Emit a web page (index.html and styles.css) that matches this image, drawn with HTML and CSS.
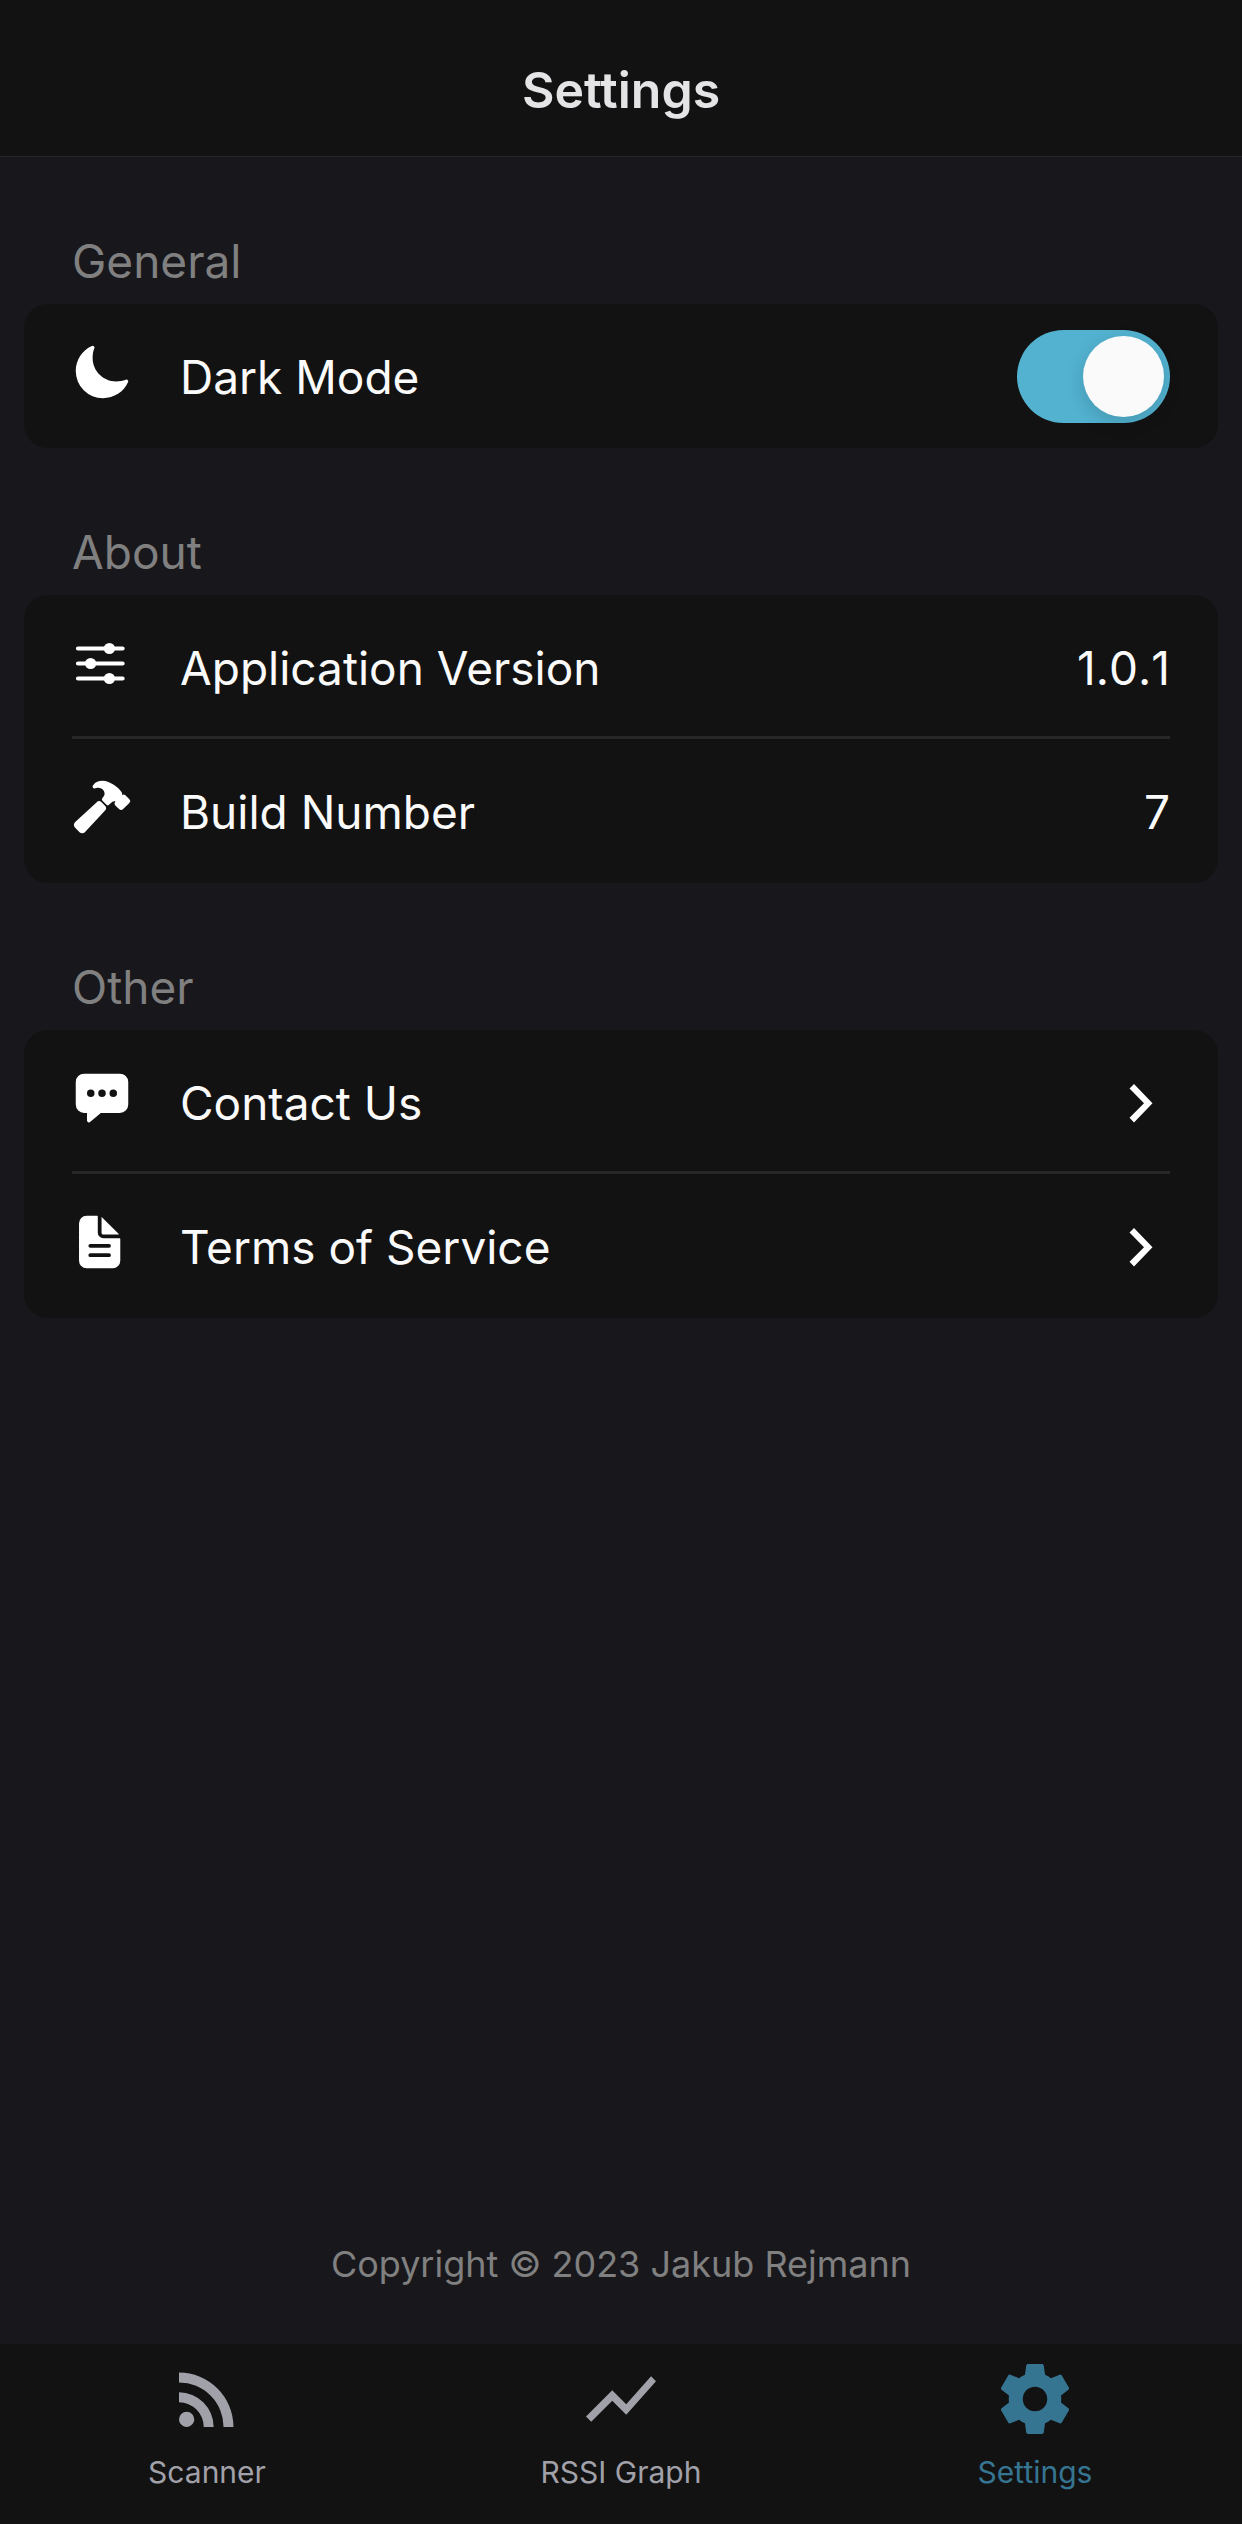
FILE: index.html
```html
<!DOCTYPE html>
<html lang="en">
<head>
<meta charset="utf-8">
<meta name="viewport" content="width=device-width, initial-scale=1">
<title>Settings</title>
<link rel="stylesheet" href="styles.css">
</head>
<body>
<header class="header">
  <h1 class="header-title">Settings</h1>
</header>

<main class="content">
  <section>
    <h2 class="section-title">General</h2>
    <ul class="card">
      <li class="row">
        <svg class="row-icon" viewBox="0 0 512 512" aria-hidden="true"><path d="M264 480A232 232 0 0132 248c0-94 54-178.28 137.61-214.67a16 16 0 0121.06 21.06C181.07 76.43 176 104.66 176 136c0 110.28 89.72 200 200 200 31.34 0 59.57-5.07 81.61-14.67a16 16 0 0121.06 21.06C442.28 426 358 480 264 480z"/></svg>
        <label class="row-label" for="dark-mode">Dark Mode</label>
        <input class="switch" type="checkbox" role="switch" id="dark-mode" checked>
      </li>
    </ul>
  </section>

  <section>
    <h2 class="section-title">About</h2>
    <ul class="card">
      <li class="row">
        <svg class="row-icon" viewBox="0 0 60 60" aria-hidden="true"><path d="M6 15.5h44.6M6 30.5h44.6M6 45.5h44.6" fill="none" stroke="currentColor" stroke-width="4.2" stroke-linecap="round"/><circle cx="37.4" cy="15.5" r="5.6"/><circle cx="18.6" cy="30.5" r="5.6"/><circle cx="37.4" cy="45.5" r="5.6"/></svg>
        <span class="row-label">Application Version</span>
        <span class="row-value">1.0.1</span>
      </li>
      <li class="row">
        <svg class="row-icon" viewBox="0 0 512 512" aria-hidden="true"><path d="M280.16 242.79l-26.11-26.12a32 32 0 00-45.14-.12L27.38 384.08c-6.61 6.23-10.95 14.17-11.35 23.06a32.11 32.11 0 009.21 23.94l39 39.43a.46.46 0 00.07.07A32.29 32.29 0 0087 480h1.18c8.89-.33 17-4.64 23.32-11.26l168.68-180.7a32 32 0 00-.02-45.25zM490 190l-.31-.31-34.27-33.92a21.46 21.46 0 00-15.28-6.26 21.89 21.89 0 00-12.79 4.14c0-.43.06-.85.09-1.22.45-6.5 1.15-16.32-5.2-25.22a258 258 0 00-24.8-28.74.6.6 0 00-.08-.08c-13.32-13.12-42.31-37.83-86.72-55.94A139.55 139.55 0 00257.56 32C226 32 202 46.24 192.81 54.68a119.92 119.92 0 00-14.18 17.22 16 16 0 0018.65 24.34 74.45 74.45 0 018.58-2.63 63.46 63.46 0 0118.45-1.15c13.19 1.09 28.79 7.64 35.69 13.09 11.7 9.41 17.33 22.09 18.26 41.09.18 3.82-7.72 18.14-20 34.48a16 16 0 001.45 21l34.41 34.41a16 16 0 0022 .62c9.73-8.69 24.55-21.79 29.73-25 7.69-4.73 13.19-5.64 14.7-5.8a19.18 19.18 0 0111.29 2.38 1.24 1.24 0 01-.31.95l-1.82 1.73-.3.28a21.52 21.52 0 00.05 30.54l34.26 33.91a21.45 21.45 0 0015.28 6.25 21.7 21.7 0 0015.22-6.2l55.5-54.82c.19-.19.38-.39.56-.59A21.87 21.87 0 00490 190z"/></svg>
        <span class="row-label">Build Number</span>
        <span class="row-value">7</span>
      </li>
    </ul>
  </section>

  <section>
    <h2 class="section-title">Other</h2>
    <ul class="card">
      <li>
        <a class="row" href="#contact">
          <svg class="row-icon" viewBox="0 0 512 512" aria-hidden="true"><path d="M408 48H104a72.08 72.08 0 00-72 72v192a72.08 72.08 0 0072 72h24v64a16 16 0 0026.25 12.29L245.74 384H408a72.08 72.08 0 0072-72V120a72.08 72.08 0 00-72-72zM160 248a32 32 0 1132-32 32 32 0 01-32 32zm96 0a32 32 0 1132-32 32 32 0 01-32 32zm96 0a32 32 0 1132-32 32 32 0 01-32 32z"/></svg>
          <span class="row-label">Contact Us</span>
          <svg class="row-chevron" viewBox="0 0 60 60" aria-hidden="true"><path d="M19.5 44.8 34 30.2 19.5 15.5 24 11 42.5 30.2 24 49.4z"/></svg>
        </a>
      </li>
      <li>
        <a class="row" href="#terms">
          <svg class="row-icon" viewBox="20 0 512 512" aria-hidden="true"><path d="M428 224H288a48 48 0 01-48-48V36a4 4 0 00-4-4h-92a64 64 0 00-64 64v320a64 64 0 0064 64h224a64 64 0 0064-64V228a4 4 0 00-4-4zm-92 160H176a16 16 0 010-32h160a16 16 0 010 32zm0-80H176a16 16 0 010-32h160a16 16 0 010 32z"/><path d="M419.22 188.59L275.41 44.78a2 2 0 00-3.41 1.41V176a16 16 0 0016 16h129.81a2 2 0 001.41-3.41z"/></svg>
          <span class="row-label">Terms of Service</span>
          <svg class="row-chevron" viewBox="0 0 60 60" aria-hidden="true"><path d="M19.5 44.8 34 30.2 19.5 15.5 24 11 42.5 30.2 24 49.4z"/></svg>
        </a>
      </li>
    </ul>
  </section>

  <p class="copyright">Copyright © 2023 Jakub Rejmann</p>
</main>

<nav class="tabs" aria-label="Main">
  <a class="tab" href="#scanner">
    <svg class="tab-icon" viewBox="0 0 24 24" aria-hidden="true"><path d="M6.18,15.64A2.18,2.18 0 0,1 8.36,17.82C8.36,19 7.38,20 6.18,20C5,20 4,19 4,17.82A2.18,2.18 0 0,1 6.18,15.64M4,4.44A15.56,15.56 0 0,1 19.56,20H16.73A12.73,12.73 0 0,0 4,7.27V4.44M4,10.1A9.9,9.9 0 0,1 13.9,20H11.07A7.07,7.07 0 0,0 4,12.93V10.1Z"/></svg>
    <span>Scanner</span>
  </a>
  <a class="tab" href="#graph">
    <svg class="tab-icon" viewBox="0 0 24 24" aria-hidden="true"><path d="M3.5,18.5L9.5,12.5L13.5,16.5L22,6.92L20.59,5.5L13.5,13.5L9.5,9.5L2,17L3.5,18.5Z"/></svg>
    <span>RSSI Graph</span>
  </a>
  <a class="tab tab-active" href="#settings" aria-current="page">
    <svg class="tab-icon" viewBox="0 0 24 24" aria-hidden="true"><path d="M12,15.5A3.5,3.5 0 0,1 8.5,12A3.5,3.5 0 0,1 12,8.5A3.5,3.5 0 0,1 15.5,12A3.5,3.5 0 0,1 12,15.5M19.43,12.97C19.47,12.65 19.5,12.33 19.5,12C19.5,11.67 19.47,11.34 19.43,11L21.54,9.37C21.73,9.22 21.78,8.95 21.66,8.73L19.66,5.27C19.54,5.05 19.27,4.96 19.05,5.05L16.56,6.05C16.04,5.66 15.5,5.32 14.87,5.07L14.5,2.42C14.46,2.18 14.25,2 14,2H10C9.75,2 9.54,2.18 9.5,2.42L9.13,5.07C8.5,5.32 7.96,5.66 7.44,6.05L4.95,5.05C4.73,4.96 4.46,5.05 4.34,5.27L2.34,8.73C2.21,8.95 2.27,9.22 2.46,9.37L4.57,11C4.53,11.34 4.5,11.67 4.5,12C4.5,12.33 4.53,12.65 4.57,12.97L2.46,14.63C2.27,14.78 2.21,15.05 2.34,15.27L4.34,18.73C4.46,18.95 4.73,19.03 4.95,18.95L7.44,17.94C7.96,18.34 8.5,18.68 9.13,18.93L9.5,21.58C9.54,21.82 9.75,22 10,22H14C14.25,22 14.46,21.82 14.5,21.58L14.87,18.93C15.5,18.67 16.04,18.34 16.56,17.94L19.05,18.95C19.27,19.03 19.54,18.95 19.66,18.73L21.66,15.27C21.78,15.05 21.73,14.78 21.54,14.63L19.43,12.97Z"/></svg>
    <span>Settings</span>
  </a>
</nav>
</body>
</html>
```
FILE: styles.css
```css
:root {
  --background: #18171c;
  --surface: #121212;
  --divider: #27272a;
  --text: #fafafa;
  --muted: #808080;
  --accent: #52b2d0;
}

* {
  box-sizing: border-box;
}

body {
  margin: 0;
  min-height: 100vh;
  display: flex;
  flex-direction: column;
  background: var(--background);
  color: var(--text);
  font-family: Inter, "Liberation Sans", sans-serif;
  font-size: 46px;
  line-height: 60px;
}

a {
  color: inherit;
  text-decoration: none;
}

svg {
  display: block;
  flex: none;
  fill: currentColor;
}

.header {
  padding: 60px 24px 36px;
  background: var(--surface);
  border-bottom: 1px solid var(--divider);
  text-align: center;
}

.header-title {
  margin: 0;
  color: #e4e4e7;
  font-size: 50px;
  font-weight: 600;
  line-height: 60px;
}

.content {
  flex: 1;
  display: flex;
  flex-direction: column;
  padding: 0 24px;
}

.section-title {
  margin: 0;
  padding: 74px 48px 13px;
  color: var(--muted);
  font-size: 46px;
  font-weight: 400;
}

.card {
  margin: 0;
  padding: 0 48px;
  list-style: none;
  background: var(--surface);
  border-radius: 24px;
}

.row {
  display: flex;
  align-items: flex-start;
  min-height: 144px;
  padding-top: 43px;
}

.card > :not(:last-child).row,
.card > :not(:last-child) > .row {
  border-bottom: 3px solid var(--divider);
}

.row-icon {
  width: 60px;
  height: 60px;
  margin: -5px 48px 0 0;
  color: #fff;
}

.row-label {
  flex: 1;
}

.row-value {
  font-kerning: none;
}

.row-chevron {
  width: 60px;
  height: 60px;
  color: #fff;
}

.switch {
  appearance: none;
  display: flex;
  width: 153px;
  height: 93px;
  margin: -17px 0 0;
  padding: 6px;
  border-radius: 47px;
  background: #3f3f46;
}

.switch::before {
  content: "";
  width: 81px;
  height: 81px;
  border-radius: 50%;
  background: var(--text);
  box-shadow: 0 6px 18px rgba(0, 0, 0, 0.15);
}

.switch:checked {
  justify-content: flex-end;
  background: var(--accent);
}

.copyright {
  margin: auto 0 50px;
  color: var(--muted);
  font-size: 36px;
  line-height: 60px;
  text-align: center;
}

.tabs {
  display: flex;
  min-height: 180px;
  padding-top: 13px;
  background: var(--surface);
}

.tab {
  flex: 1;
  display: flex;
  flex-direction: column;
  align-items: center;
  gap: 13px;
  color: #a1a1aa;
  font-size: 30px;
  line-height: 36px;
}

.tab-active {
  color: #367592;
}

.tab-icon {
  width: 84px;
  height: 84px;
}
```
